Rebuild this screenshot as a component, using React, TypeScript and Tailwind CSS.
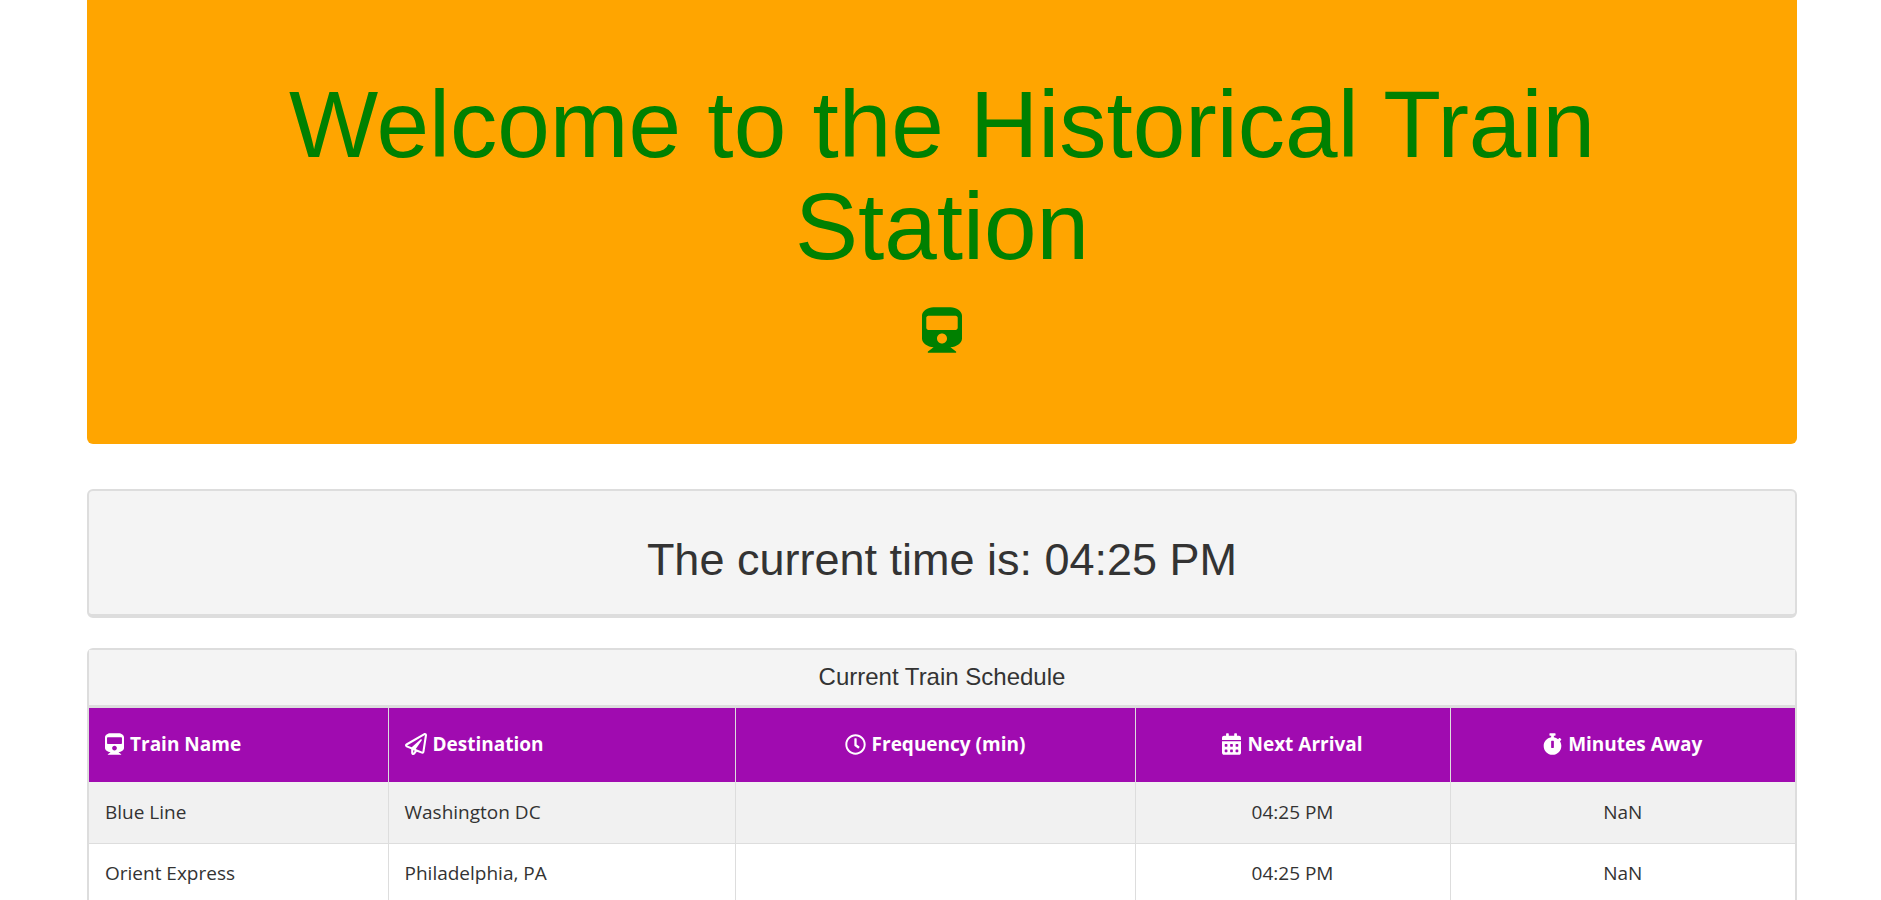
import React from 'react';
import { FaTrain, FaRegPaperPlane, FaRegClock, FaCalendarAlt, FaStopwatch } from 'react-icons/fa';

const rows = [
  { name: 'Blue Line', destination: 'Washington DC', arrival: '04:25 PM', away: 'NaN' },
  { name: 'Orient Express', destination: 'Philadelphia, PA', arrival: '04:25 PM', away: 'NaN' },
];

export default function App() {
  return (
    <div className="h-[900px] overflow-hidden bg-white pl-[87px] pr-[84px] font-['Liberation_Sans',sans-serif] text-[#333]">
      <div className="flex h-[444px] flex-col items-center rounded-b-md bg-[#ffa500] px-[120px] pt-[73px] text-[#008000]">
        <h1 className="text-center text-[94.5px] leading-[102px]">Welcome to the Historical Train Station</h1>
        <FaTrain className="mt-[30px] h-[46px] w-[40px]" />
      </div>

      <div className="mt-[45px] flex h-[129px] items-center justify-center rounded-md border-2 border-b-4 border-[#ddd] bg-[#f4f4f4] pt-[15px]">
        <h2 className="text-[45px] leading-[50px]">The current time is: 04:25 PM</h2>
      </div>

      <div className="mt-[30px] rounded-t-md border-x-2 border-t-2 border-[#ddd]">
        <div className="flex h-[58px] items-center justify-center border-b-[3px] border-[#ddd] bg-[#f4f4f4] pb-[2px] text-[24px]">
          Current Train Schedule
        </div>
        <table className="w-full table-fixed border-collapse font-['Open_Sans',sans-serif] text-[19px]">
          <colgroup>
            <col className="w-[299px]" />
            <col className="w-[347px]" />
            <col className="w-[400px]" />
            <col className="w-[315px]" />
            <col />
          </colgroup>
          <thead>
            <tr className="h-[74px] bg-[#a00bb0] font-bold text-white">
              <th className="px-4 pb-[2px] text-left">
                <FaTrain className="mr-[6px] inline h-[22px] w-[19px] align-[-4px]" />Train Name
              </th>
              <th className="border-l border-[#ddd] px-4 pb-[2px] text-left">
                <FaRegPaperPlane className="mr-[6px] inline h-[22px] w-[22px] align-[-4px]" />Destination
              </th>
              <th className="border-l border-[#ddd] px-4 pb-[2px]">
                <FaRegClock className="mr-[6px] inline h-[21px] w-[21px] align-[-4px]" />Frequency (min)
              </th>
              <th className="border-l border-[#ddd] px-4 pb-[2px]">
                <FaCalendarAlt className="mr-[6px] inline h-[22px] w-[19px] align-[-4px]" />Next Arrival
              </th>
              <th className="border-l border-[#ddd] px-4 pb-[2px]">
                <FaStopwatch className="mr-[6px] inline h-[22px] w-[19px] align-[-4px]" />Minutes Away
              </th>
            </tr>
          </thead>
          <tbody>
            {rows.map((row, i) => (
              <tr key={row.name} className={i % 2 === 0 ? 'h-[61px] bg-[#f1f1f1]' : 'h-[61px] bg-white'}>
                <td className="border-b border-[#ddd] px-4">{row.name}</td>
                <td className="border-b border-l border-[#ddd] px-4">{row.destination}</td>
                <td className="border-b border-l border-[#ddd] px-4"></td>
                <td className="border-b border-l border-[#ddd] px-4 text-center">{row.arrival}</td>
                <td className="border-b border-l border-[#ddd] px-4 text-center">{row.away}</td>
              </tr>
            ))}
          </tbody>
        </table>
      </div>
    </div>
  );
}
